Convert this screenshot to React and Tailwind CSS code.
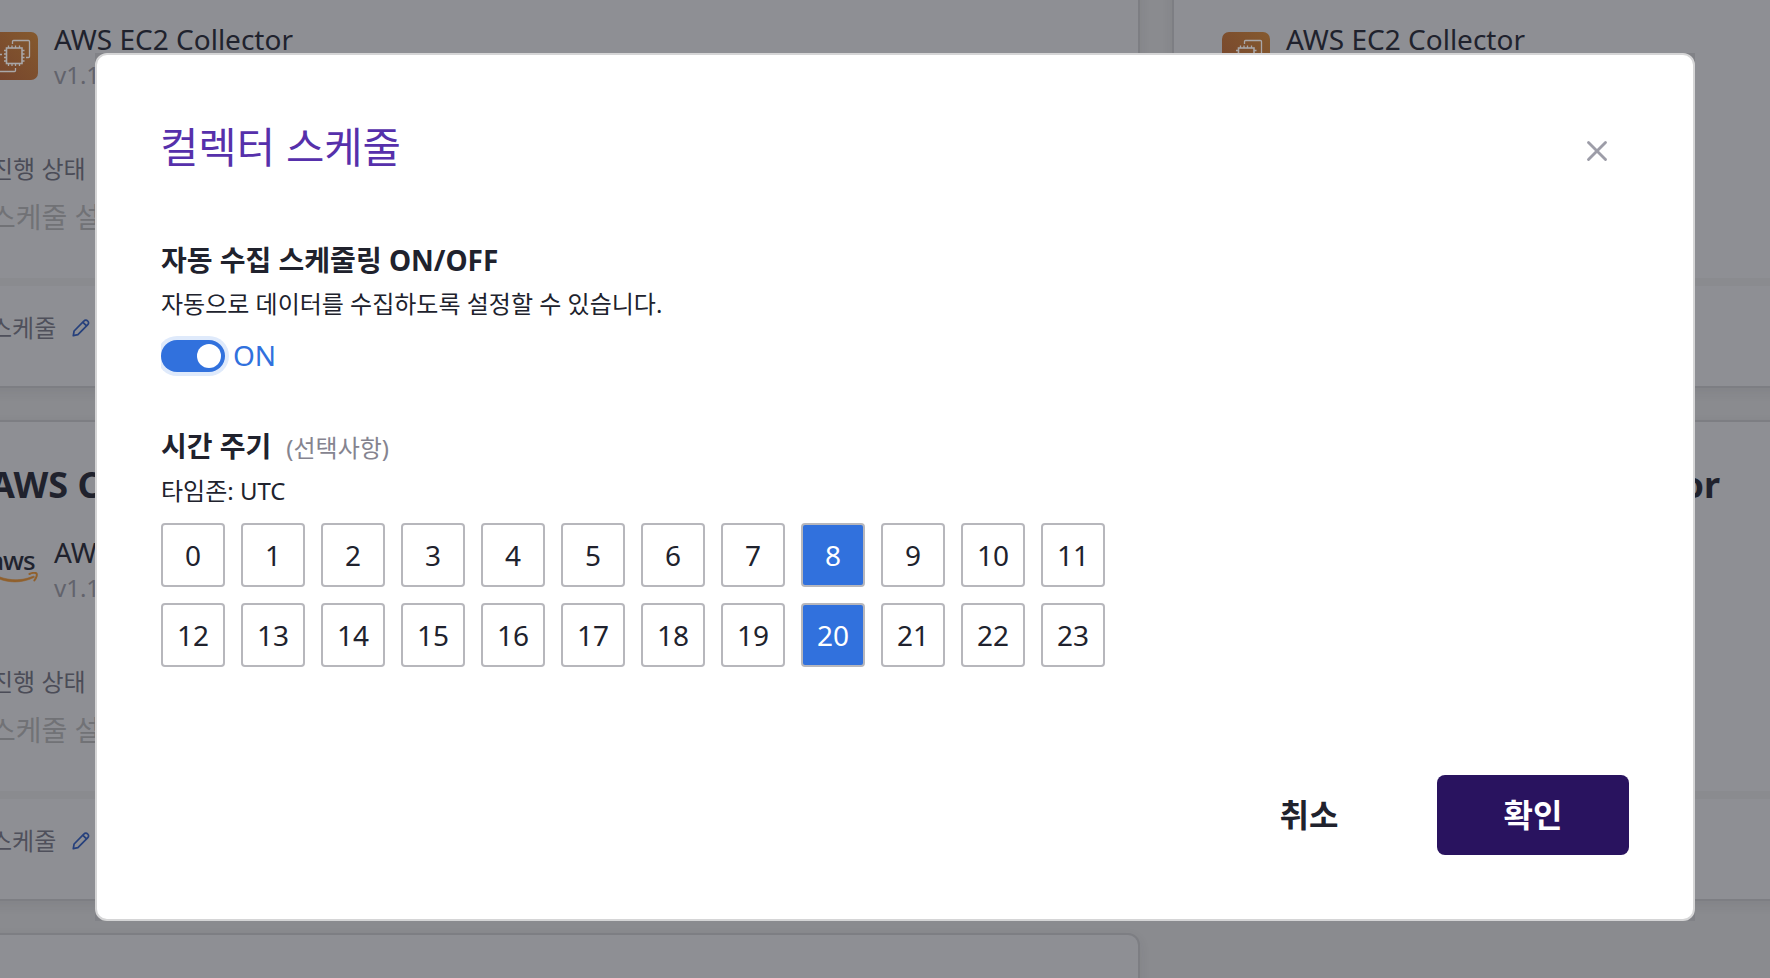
import { X } from "lucide-react";

const HOURS = Array.from({ length: 24 }, (_, hour) => hour);
const SELECTED = [8, 20];

function Ec2Icon() {
  return (
    <svg className="size-12 shrink-0" viewBox="0 0 48 48" fill="none">
      <defs>
        <linearGradient id="ec2" x1="0" y1="48" x2="48" y2="0" gradientUnits="userSpaceOnUse">
          <stop stopColor="#75432d" />
          <stop offset="1" stopColor="#855a2e" />
        </linearGradient>
      </defs>
      <rect width="48" height="48" rx="7" fill="url(#ec2)" />
      <g stroke="#a9a7a8" strokeWidth="1.3">
        <rect x="16.5" y="16" width="15.500" height="15.500" strokeWidth="1.600" />
        <path d="M18.500 16v-2.500M22 16v-2.500M25.500 16v-2.500M29.500 16v-2.500M18.500 31.500v2.500M22 31.500v2.500M25.500 31.500v2.500M29.500 31.500v2.500M16.500 18.500h-2.500M16.500 22h-2.500M16.500 25.500h-2.500M16.500 29h-2.500M32 18.500h2.500M32 22h2.500M32 25.500h2.500M32 29h2.500" />
        <path d="M22.500 12V9.500a1 1 0 0 1 1-1h15a1 1 0 0 1 1 1v15a1 1 0 0 1-1 1H36M12 22.500H9.500a1 1 0 0 0-1 1v15a1 1 0 0 0 1 1h15a1 1 0 0 0 1-1V36" />
      </g>
    </svg>
  );
}

function AwsIcon() {
  return (
    <div className="flex size-12 shrink-0 flex-col items-center pt-[3px]">
      <span className="h-[24px] pr-1 font-['Noto_Sans'] text-[26px] leading-[24px] font-medium tracking-[-1px] text-[#20232e]">aws</span>
      <svg className="h-[14px] w-12" viewBox="0 0 48 14" fill="none">
        <path d="M1 2.500C13 11 30 12.500 44.500 5.200 44.500 4.500 43.800 4 43 4.300 29 10 15 8.500 2 1.500z" fill="#90602c" stroke="#90602c" strokeWidth="0.600" />
        <path d="M39.500 2c2.500-1.300 6-1.500 7-.6.8 1.300-.1 4.800-2.100 7" stroke="#90602c" strokeWidth="2" strokeLinecap="round" strokeLinejoin="round" />
      </svg>
    </div>
  );
}

function PencilIcon() {
  return (
    <svg className="size-[18px]" viewBox="0 0 18 18" fill="none" stroke="#26407c" strokeWidth="1.700" strokeLinejoin="round">
      <path d="M1.300 16.700l.8-4.700L11.800 2.200c1.300-1.400 2.700-1.400 3.900-.2s1.200 2.500-.1 3.800L5.900 15.600z M11 3.300l3.500 3.500" />
    </svg>
  );
}

function CollectorCard({ title, titleClass = "", icon, name }) {
  return (
    <section className="flex h-[481px] flex-col rounded-[12px] border-2 border-[#7d7e83] bg-[#8e8f94] shadow-[0_4px_12px_rgba(40,42,50,0.08)]">
      <div className="h-[369px] px-12">
        <h2 className={`pt-[37px] text-[36px] leading-[52px] font-bold ${titleClass}`}>{title}</h2>
        <div className="mt-[18px] flex gap-4">
          <div className="pt-4">{icon}</div>
          <div>
            <p className="pt-[3px] text-[28px] leading-[40px]">{name}</p>
            <p className="-mt-0.5 text-[24px] leading-[36px] text-[#62636c]">v1.11</p>
          </div>
        </div>
        <p className="mt-[58px] ml-px text-[24px] leading-[36px] text-[#4b4c57]">진행 상태</p>
        <p className="mt-[9px] text-[28px] leading-[42px] text-[#717276]">스케줄 설정</p>
      </div>
      <div className="h-2 shrink-0 bg-[#8a8b8f]" />
      <div className="flex grow items-center gap-4 px-12 pb-[17px]">
        <span className="text-[24px] leading-[36px] text-[#4f505b]">스케줄</span>
        <PencilIcon />
      </div>
    </section>
  );
}

function Toggle() {
  return (
    <div className="flex items-center gap-2">
      <div className="overflow-hidden py-1 pr-1">
        <div className="flex h-8 w-16 items-center justify-end rounded-full bg-[#3171dd] px-1 ring-4 ring-[#dfeafb]">
          <span className="size-6 rounded-full bg-white" />
        </div>
      </div>
      <span className="-ml-1 pb-0.5 text-[28px] leading-[38px] text-[#3171dd]">ON</span>
    </div>
  );
}

function ScheduleModal() {
  return (
    <div className="h-[868px] w-[1600px] bg-[#818287]">
      <div className="flex h-full flex-col rounded-[12px] border-2 border-[#d5d5d6] bg-white pt-[62px] pr-16 pb-16 pl-16">
        <header className="flex items-start justify-between">
          <h1 className="-ml-px text-[41.7px] leading-[60px] text-[#5630ab]">컬렉터 스케줄</h1>
          <button className="mt-[17px] mr-[15px] text-[#9d9da8]" aria-label="닫기">
            <X size={34} strokeWidth={2} />
          </button>
        </header>
        <section className="mt-[63px]">
          <h3 className="text-[28px] leading-[40px] font-bold">자동 수집 스케줄링 ON/OFF</h3>
          <p className="mt-[6px] text-[24px] leading-[36px]">자동으로 데이터를 수집하도록 설정할 수 있습니다.</p>
          <div className="mt-[14px]"><Toggle /></div>
        </section>
        <section className="mt-[50px]">
          <div className="flex items-baseline gap-[15px]">
            <h3 className="text-[28px] leading-[40px] font-bold">시간 주기</h3>
            <span className="text-[24px] leading-[36px] text-[#858490]">(선택사항)</span>
          </div>
          <p className="mt-[7px] text-[24px] leading-[36px]">타임존: UTC</p>
          <div className="mt-[14px] grid w-[944px] grid-cols-12 gap-4">
            {HOURS.map((hour) => (
              <button
                key={hour}
                className={`flex size-16 items-center justify-center rounded-[4px] border-2 border-[#b7b7bc] text-[28px] leading-[40px] ${
                  SELECTED.includes(hour) ? "bg-[#3171dd] text-white" : "bg-white"
                }`}
              >
                {hour}
              </button>
            ))}
          </div>
        </section>
        <footer className="mt-auto flex justify-end gap-8">
          <button className="h-20 w-48 pb-px text-[32px] leading-[48px] font-bold">취소</button>
          <button className="h-20 w-48 rounded-[8px] bg-[#29135f] pb-px text-[32px] leading-[48px] font-bold text-white">확인</button>
        </footer>
      </div>
    </div>
  );
}

export default function App() {
  return (
    <div className="relative h-[978px] w-[1770px] overflow-hidden bg-[#8a8b8f] font-['Noto_Sans','Noto_Sans_CJK_KR',sans-serif] whitespace-nowrap text-[#20222d]">
      <div className="-mt-[93px] -ml-[60px] grid w-[2432px] grid-cols-2 gap-8">
        <CollectorCard title="AWS EC2 Collector" icon={<Ec2Icon />} name="AWS EC2 Collector" />
        <CollectorCard title="AWS EC2 Collector" icon={<Ec2Icon />} name="AWS EC2 Collector" />
        <CollectorCard title="AWS Collector" icon={<AwsIcon />} name="AWS Collector" />
        <CollectorCard title="AWS Collector" titleClass="w-[498px] text-right" icon={<AwsIcon />} name="AWS Collector" />
        <CollectorCard title="AWS Collector" icon={<AwsIcon />} name="AWS Collector" />
      </div>
      <div className="absolute inset-0 pt-[53px] pl-[95px]">
        <ScheduleModal />
      </div>
    </div>
  );
}
